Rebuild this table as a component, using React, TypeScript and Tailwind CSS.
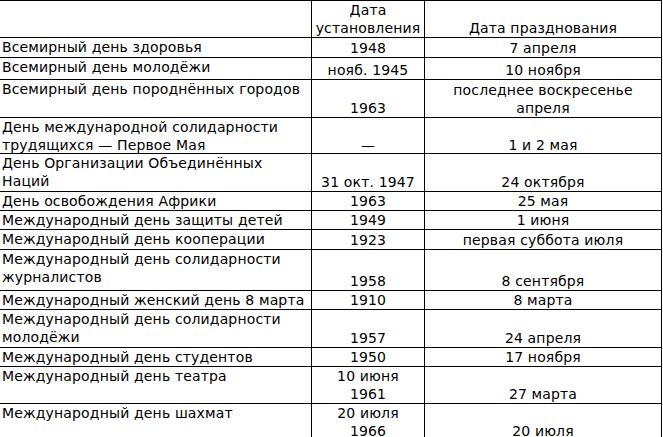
type Row = {
  h: string;
  name: React.ReactNode;
  est: React.ReactNode;
  cel: React.ReactNode;
};

const rows: Row[] = [
  { h: "h-[20px]", name: "Всемирный день здоровья", est: "1948", cel: "7 апреля" },
  { h: "h-[22px]", name: "Всемирный день молодёжи", est: "нояб. 1945", cel: "10 ноября" },
  {
    h: "h-[38px]",
    name: "Всемирный день породнённых городов",
    est: "1963",
    cel: (
      <>
        последнее воскресенье
        <br />
        апреля
      </>
    ),
  },
  {
    h: "h-[36px]",
    name: (
      <>
        День международной солидарности
        <br />
        трудящихся — Первое Мая
      </>
    ),
    est: "—",
    cel: "1 и 2 мая",
  },
  {
    h: "h-[38px]",
    name: (
      <>
        День Организации Объединённых
        <br />
        Наций
      </>
    ),
    est: "31 окт. 1947",
    cel: "24 октября",
  },
  { h: "h-[19px]", name: "День освобождения Африки", est: "1963", cel: "25 мая" },
  { h: "h-[19px]", name: "Международный день защиты детей", est: "1949", cel: "1 июня" },
  { h: "h-[20px]", name: "Международный день кооперации", est: "1923", cel: "первая суббота июля" },
  {
    h: "h-[41px]",
    name: (
      <>
        Международный день солидарности
        <br />
        журналистов
      </>
    ),
    est: "1958",
    cel: "8 сентября",
  },
  { h: "h-[19px]", name: "Международный женский день 8 марта", est: "1910", cel: "8 марта" },
  {
    h: "h-[38px]",
    name: (
      <>
        Международный день солидарности
        <br />
        молодёжи
      </>
    ),
    est: "1957",
    cel: "24 апреля",
  },
  { h: "h-[19px]", name: "Международный день студентов", est: "1950", cel: "17 ноября" },
  {
    h: "h-[37px]",
    name: "Международный день театра",
    est: (
      <>
        10 июня
        <br />
        1961
      </>
    ),
    cel: "27 марта",
  },
  {
    h: "h-[34px]",
    name: "Международный день шахмат",
    est: (
      <>
        20 июля
        <br />
        1966
      </>
    ),
    cel: "20 июля",
  },
];

function TableRow({ row }: { row: Row }) {
  return (
    <div className={`grid grid-cols-[311px_113px_237px] border-t border-black ${row.h}`}>
      <div className="pl-[2px] whitespace-nowrap">{row.name}</div>
      <div className="flex items-end justify-center border-l border-black text-center whitespace-nowrap">
        <span>{row.est}</span>
      </div>
      <div className="flex items-end justify-center border-l border-black text-center whitespace-nowrap">
        <span>{row.cel}</span>
      </div>
    </div>
  );
}

export default function App() {
  return (
    <div className="h-[437px] w-[663px] overflow-hidden bg-white font-['DejaVu_Sans',sans-serif] text-[14px] leading-[18px] tracking-[0.15px] text-black">
      <div className="w-[662px] border-r border-black">
        {/* Header */}
        <div className="grid h-[37px] grid-cols-[311px_113px_237px] border-t border-black">
          <div />
          <div className="flex items-end justify-center border-l border-black text-center">
            <span>
              Дата
              <br />
              установления
            </span>
          </div>
          <div className="flex items-end justify-center border-l border-black text-center">
            <span>Дата празднования</span>
          </div>
        </div>

        {rows.map((row, i) => (
          <TableRow key={i} row={row} />
        ))}
      </div>
    </div>
  );
}
